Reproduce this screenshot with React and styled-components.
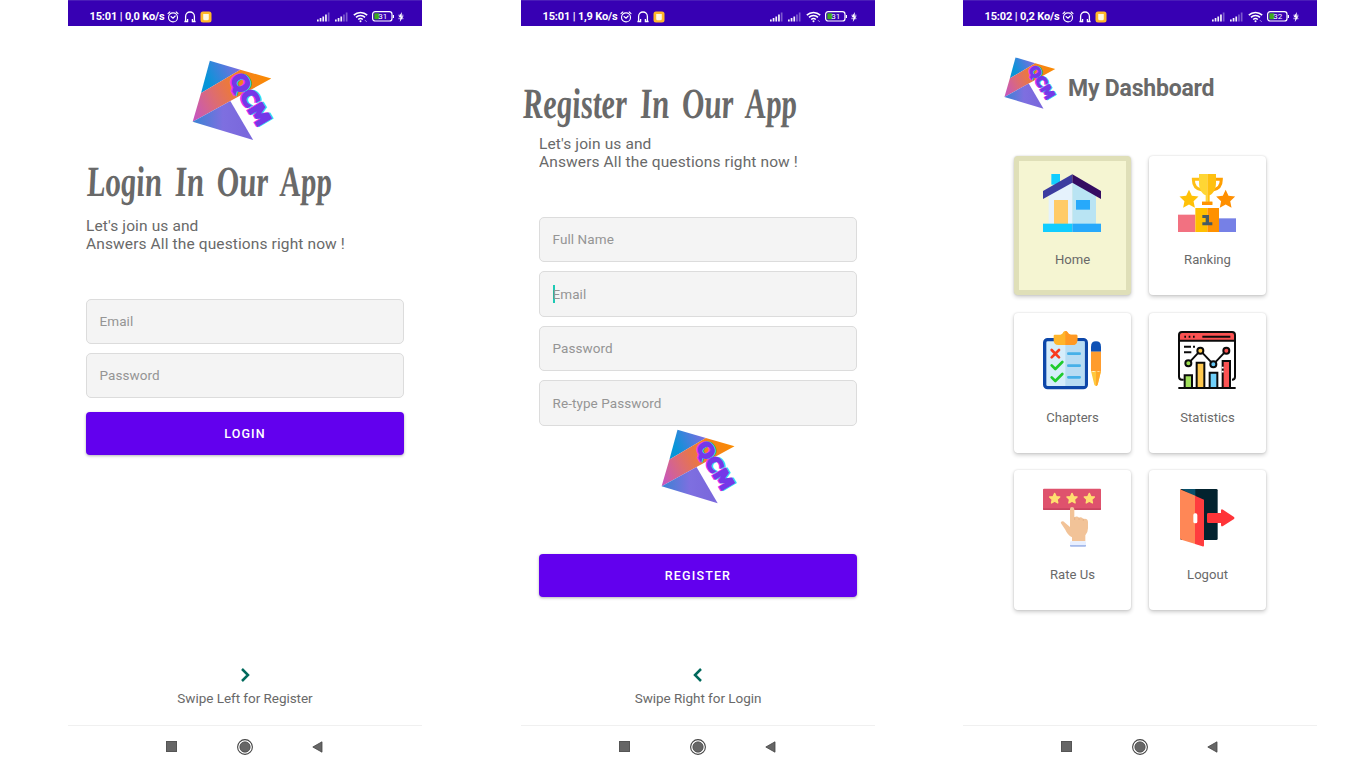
import React from "react";
import styled, { createGlobalStyle } from "styled-components";

const Global = createGlobalStyle`
  * { box-sizing: border-box; }
  body { margin: 0; background: #fff; font-family: Roboto, "Liberation Sans", sans-serif; color: #696969; }
  h1, h2, p { margin: 0; font-weight: 400; }
  svg { display: block; flex: none; overflow: visible; }
`;

const Stage = styled.main`
  display: grid;
  grid-template-columns: 354px 354px 354px;
  column-gap: 99px;
  width: 1366px;
  height: 768px;
  padding-left: 68px;
`;

const Phone = styled.section`
  display: flex;
  flex-direction: column;
  height: 768px;
  margin-left: ${(p) => p.$shift || 0}px;
  width: 354px;
`;

const StatusBar = styled.header`
  display: flex;
  align-items: center;
  flex: none;
  height: 26px;
  padding: 6px 18px 0 21.5px;
  background: #3700b3;
  border-top: 1px solid #4a1cb8;
  color: #fff;
`;

const Clock = styled.span`
  width: 77.5px;
  font-size: 11px;
  line-height: 14px;
  font-weight: 700;
  letter-spacing: -0.15px;
  white-space: nowrap;
`;

const StatusIcons = styled.div`
  display: flex;
  align-items: center;
  gap: ${(p) => p.$gap}px;
  margin-left: ${(p) => (p.$end ? "auto" : 0)};
`;

const Screen = styled.div`
  display: flex;
  flex-direction: column;
  flex: none;
  height: 699px;
  padding: ${(p) => p.$top}px 18px 0;
`;

const LogoSlot = styled.div`
  display: flex;
  padding-top: ${(p) => p.$drop || 0}px;
  padding-left: ${(p) => p.$left || 0}px;
  height: ${(p) => p.$height}px;
`;

const ScriptHeading = styled.h1`
  height: 48px;
  margin-left: ${(p) => p.$left}px;
  font-family: "Liberation Serif", serif;
  font-size: 43px;
  line-height: 48px;
  font-style: italic;
  font-weight: 700;
  word-spacing: 7px;
  white-space: nowrap;
  transform: scaleX(0.72) skewX(6deg);
  transform-origin: left bottom;
`;

const Lead = styled.p`
  margin-top: ${(p) => p.$gap}px;
  font-size: 15.5px;
  line-height: 18px;
  letter-spacing: 0.12px;
  white-space: nowrap;
`;

const Fields = styled.form`
  display: flex;
  flex-direction: column;
  gap: 9px;
  margin-top: ${(p) => p.$gap}px;
`;

const Field = styled.div`
  display: flex;
  align-items: center;
  height: 45.4px;
  padding: 0 0 0.6px 12.5px;
  border: 1px solid #dcdcdc;
  border-radius: 5px;
  background: #f4f4f4;
  color: #959595;
  font-size: 13.5px;
  letter-spacing: 0.08px;
`;

const Caret = styled.i`
  width: 2px;
  height: 18px;
  margin-right: -2px;
  background: #1cc9b4;
`;

const Action = styled.button`
  flex: none;
  height: 43px;
  margin-top: ${(p) => p.$gap}px;
  border: 0;
  border-radius: 4px;
  background: #6200ee;
  box-shadow: 0 1px 3px rgba(0, 0, 0, 0.3);
  color: #fff;
  font: 500 12.5px Roboto, sans-serif;
  letter-spacing: 1.15px;
`;

const Swipe = styled.footer`
  display: flex;
  flex-direction: column;
  align-items: center;
  gap: 7px;
  margin-top: auto;
  padding-bottom: 18px;
  font-size: 13.5px;
  line-height: 18px;
  letter-spacing: -0.04px;
`;

const NavBar = styled.nav`
  display: flex;
  align-items: center;
  flex: none;
  height: 43px;
  padding: 0 0 1px 98px;
  gap: 59.5px;
  border-top: 1px solid #f0f0f0;
`;

const DashHeader = styled.div`
  display: flex;
  align-items: center;
  gap: 11px;
  padding-left: 23px;
  height: 52px;
`;

const DashTitle = styled.h2`
  padding-top: 11px;
  font-size: 23px;
  line-height: 28px;
  font-weight: 700;
  letter-spacing: -0.2px;
  white-space: nowrap;
`;

const Cards = styled.div`
  display: grid;
  grid-template-columns: 117px 117px;
  grid-auto-rows: 139.6px;
  gap: 17.8px 18px;
  margin: 46.6px 0 0 33px;
`;

const Card = styled.article`
  display: flex;
  flex-direction: column;
  align-items: center;
  padding-top: ${(p) => (p.$active ? 13.3 : 18.3)}px;
  padding-right: 1px;
  border: ${(p) => (p.$active ? "5px solid #dfdfb8" : "0 solid #fff")};
  border-radius: 4px;
  background: ${(p) => (p.$active ? "#f5f5d2" : "#fff")};
  box-shadow: 0 0 2px rgba(0, 0, 0, 0.14), 0 2px 4px rgba(0, 0, 0, 0.2);
  font-size: 13.1px;
  line-height: 18px;
`;

const CardLabel = styled.span`
  margin: 19.3px -1px 0 0;
`;

function Logo({ size }) {
  return (
    <svg width={size} height={size * 0.984} viewBox="38 30 244 240">
      <defs>
        <linearGradient id="sky" x1="65" y1="110" x2="180" y2="55" gradientUnits="userSpaceOnUse">
          <stop offset="0.2" stopColor="#0795d8" />
          <stop offset="1" stopColor="#7f6be0" />
        </linearGradient>
        <linearGradient id="band" x1="45" y1="195" x2="270" y2="85" gradientUnits="userSpaceOnUse">
          <stop offset="0" stopColor="#c757bc" />
          <stop offset="0.3" stopColor="#dd6c72" />
          <stop offset="0.6" stopColor="#f07d2b" />
          <stop offset="1" stopColor="#fb8b00" />
        </linearGradient>
        <linearGradient id="base" x1="45" y1="210" x2="200" y2="210" gradientUnits="userSpaceOnUse">
          <stop offset="0" stopColor="#3d82d4" />
          <stop offset="0.55" stopColor="#7e6fe0" />
          <stop offset="1" stopColor="#7a68dc" />
        </linearGradient>
      </defs>
      <path d="M91 32 182 59 65 128Z" fill="url(#sky)" />
      <path d="M182 59 274 85 152 152 40 214 65 128Z" fill="url(#band)" />
      <path d="M152 152 220 268 40 214Z" fill="url(#base)" />
      <g transform="translate(149 86) rotate(59)" fontFamily="DejaVu Sans, sans-serif" fontWeight="700" fontSize="64" strokeWidth="5">
        <text x="-2" y="3" textLength="170" lengthAdjust="spacingAndGlyphs" fill="#f026e6" stroke="#f026e6">QCM</text>
        <text x="2" y="-3" textLength="170" lengthAdjust="spacingAndGlyphs" fill="#28dcf0" stroke="#28dcf0">QCM</text>
        <text x="0" y="0" textLength="170" lengthAdjust="spacingAndGlyphs" fill="#7438e8" stroke="#7438e8">QCM</text>
      </g>
    </svg>
  );
}

function Signal({ level }) {
  return (
    <svg width="14" height="10" viewBox="0 0 14 10">
      {[2, 3.5, 5, 7, 9].map((h, i) => (
        <rect key={h} x={i * 2.7} y={9.5 - h} width="1.7" height={h} fill="#fff" opacity={i < level ? 0.95 : 0.35} />
      ))}
    </svg>
  );
}

function Status({ time, rate, battery }) {
  return (
    <StatusBar>
      <Clock>{time} | {rate} Ko/s</Clock>
      <StatusIcons $gap={4.5}>
        <svg width="12" height="12" viewBox="0 0 12 12" fill="none" stroke="#fff" strokeWidth="1.1" strokeLinecap="round">
          <circle cx="6" cy="6.4" r="4.5" />
          <path d="M1 2.7 2.8 1M11 2.7 9.2 1M4 5.5 6 7.2 8.2 5" />
        </svg>
        <svg width="12" height="12" viewBox="0 0 12 12" fill="none" stroke="#fff" strokeWidth="1.3">
          <path d="M.4 10.5h3.2V8M11.6 10.5H8.4V8M1.6 10.3V5.4a4.4 4.4 0 0 1 8.8 0v4.9" />
        </svg>
        <svg width="12" height="12" viewBox="0 0 12 12">
          <rect x="0.5" y="0.5" width="11" height="11" rx="2.5" fill="#ffb829" />
          <path d="M3.2 3h5.6v4.7a1.5 1.5 0 0 1-1.5 1.5H4.7a1.5 1.5 0 0 1-1.5-1.5z" fill="#fff8e3" />
        </svg>
      </StatusIcons>
      <StatusIcons $gap={3.9} $end>
        <Signal level={4} />
        <Signal level={3} />
        <svg width="15" height="12" viewBox="0 0 15 12" fill="none" stroke="#fff" strokeWidth="1.5">
          <path d="M.8 4.1a9.6 9.6 0 0 1 13.4 0M3 6.4a6.5 6.5 0 0 1 9 0M5.2 8.5a3.4 3.4 0 0 1 4.6 0" />
          <circle cx="7.5" cy="10.2" r="1" fill="#fff" stroke="none" />
          <path d="m12 9.2 1.7 1.7" strokeWidth="1" opacity=".6" />
        </svg>
        <svg width="22" height="11" viewBox="0 0 22 11">
          <rect x="0.6" y="0.6" width="19.4" height="9.4" rx="2.6" fill="none" stroke="#fff" strokeWidth="1.2" />
          <rect x="2.3" y="2.3" width="5" height="6" fill="#3faa1c" />
          <path d="M21.4 4v3" stroke="#fff" strokeWidth="1.2" />
          <text x="10.8" y="8.2" fontSize="8" fontFamily="Roboto" fill="#fff" textAnchor="middle">{battery}</text>
        </svg>
        <svg width="6" height="10" viewBox="0 0 6 10">
          <path d="M3.9 0 .5 5.3h2L1.8 10 5.5 4.3h-2z" fill="#fff" />
          <path d="M.3 3.2h5.2M.3 6.7h5.2" stroke="#fff" strokeWidth=".7" />
        </svg>
      </StatusIcons>
    </StatusBar>
  );
}

function Navigation() {
  return (
    <NavBar>
      <svg width="11" height="11" viewBox="0 0 11 11"><rect x=".5" y=".5" width="10" height="10" fill="#666" stroke="#555" /></svg>
      <svg width="16" height="16" viewBox="0 0 16 16">
        <circle cx="8" cy="8" r="7.4" fill="none" stroke="#444" strokeWidth="1.1" />
        <circle cx="8" cy="8" r="5.2" fill="#666" stroke="#444" strokeWidth=".7" />
      </svg>
      <svg width="11" height="12" viewBox="0 0 11 12"><path d="M.8 6 10 .8v10.4z" fill="#666" stroke="#444" strokeWidth=".8" /></svg>
    </NavBar>
  );
}

function Chevron({ left }) {
  return (
    <svg width="10" height="14" viewBox="0 0 10 14" fill="none" stroke="#00695c" strokeWidth="2.5">
      <path d={left ? "M8 1 2 7l6 6" : "M2 1l6 6-6 6"} />
    </svg>
  );
}

const starPath = (cx, cy, r) =>
  "M" + Array.from({ length: 10 }, (_, i) => {
    const a = (-90 + i * 36) * (Math.PI / 180);
    const d = i % 2 ? r * 0.48 : r;
    return `${(cx + d * Math.cos(a)).toFixed(1)} ${(cy + d * Math.sin(a)).toFixed(1)}`;
  }).join("L") + "Z";

const HomeArt = () => (
  <svg width="58" height="58" viewBox="114 78 174 174">
    <path d="M139 78h26v32h-26z" fill="#11cdff" />
    <path d="M131 140 202 98v130h-71z" fill="#e5f2fc" />
    <path d="M202 98 273 140v88h-71z" fill="#b9e4f3" />
    <path d="M114 129 202 79v25l-88 49z" fill="#3c3ca0" />
    <path d="M202 79 288 129v24l-86-49z" fill="#340c62" />
    <path d="M147 156h42v72h-42z" fill="#ffcb66" />
    <path d="M213 156h42v29h-42z" fill="#27a9fb" />
    <path d="M114 227h88v25h-88z" fill="#11cdff" />
    <path d="M202 227h86v25h-86z" fill="#27a9fb" />
  </svg>
);

const RankingArt = () => (
  <svg width="58" height="58" viewBox="114 78 174 174">
    <path d="M180 94h-20c0 19 8 30 26 32" fill="none" stroke="#ffbf15" strokeWidth="9" />
    <path d="M224 94h20c0 19-8 30-26 32" fill="none" stroke="#ff9f00" strokeWidth="9" />
    <path d="M177 78h25v92h-16v-9h11v-19c-14-7-20-22-20-38z" fill="#ffd634" />
    <path d="M202 78h26v26c0 16-6 31-19 38v19h8v9h-15z" fill="#ffc010" />
    <path d="M186 161h31v10h-31z" fill="#ff9300" />
    <path d={starPath(147, 155, 30)} fill="#ffc107" />
    <path d={starPath(257, 155, 30)} fill="#ff8f00" />
    <path d="M114 200h52v52h-52z" fill="#f27181" />
    <path d="M236 211h52v41h-52z" fill="#7680e6" />
    <path d="M166 180h36v72h-36z" fill="#ffbf00" />
    <path d="M202 180h35v72h-35z" fill="#ff9100" />
    <path d="M187 201h20v22h10v9h-30v-9h10v-13h-10z" fill="#455a64" />
  </svg>
);

const ChaptersArt = () => (
  <svg width="58" height="58" viewBox="114 78 174 174">
    <rect x="119" y="104" width="125" height="144" rx="9" fill="#d5edfb" stroke="#0d47a9" strokeWidth="10" />
    <path d="M181 109h58v134h-58z" fill="#b7dcf3" />
    <path d="M146 92q0-3 3-3h17c5-1 7-3 9-8q6-6 12 0c2 5 4 7 9 8h18q3 0 3 3v14q0 14-14 14h-43q-14 0-14-14z" fill="#ffb52b" />
    <path d="M181 78q5 0 7 4 3 7 10 7h16q3 0 3 3v14q0 14-14 14h-22z" fill="#ff9823" />
    <path d="m140 135 22 22m0-22-22 22" stroke="#f83b1f" strokeWidth="8" strokeLinecap="round" />
    <path d="m140 181 11 11 21-21M140 217l11 11 21-21" fill="none" stroke="#1fcb2e" strokeWidth="8" strokeLinecap="round" strokeLinejoin="round" />
    <path d="M190 146h34M190 182h34M190 217h34" stroke="#45b0e8" strokeWidth="8" strokeLinecap="round" />
    <path d="M258 140v-15q0-16 15-16t15 16v15z" fill="#0e51b5" />
    <path d="M258 140h30v58h-30z" fill="#ff9c2e" />
    <path d="M258 198q8 4 15 0 7 4 15 0l-10 41q-5 7-10 0z" fill="#ffc83d" />
    <path d="M273 198q7 4 15 0l-10 41q-2 4-5 4z" fill="#ffa928" />
  </svg>
);

const StatisticsArt = () => (
  <svg width="58" height="58" viewBox="114 78 174 174" stroke="#0b0b0b" strokeWidth="6">
    <path d="M117 107V90q0-9 9-9h150q9 0 9 9v17z" fill="#fb5252" />
    <path d="M117 107v108q0 9 9 9h5M285 107v108q0 9-9 9" fill="none" />
    <path d="M133 95h5m8 0h5m8 0h5M187 95h84M132 125h21m6 0h6M132 142h22" />
    <path d="m145 175 36-38 39 41 39-41" fill="none" />
    <circle cx="145" cy="175" r="9" fill="#9fe052" />
    <circle cx="181" cy="137" r="9" fill="#ffc94a" />
    <circle cx="220" cy="178" r="9" fill="#66c7f4" />
    <circle cx="259" cy="137" r="9" fill="#fb5252" />
    <path d="M134 249v-38h22v38z" fill="#a0e05a" />
    <path d="M170 249v-76h23v76z" fill="#ffc94f" />
    <path d="M209 249v-46h23v46z" fill="#70cff8" />
    <path d="M248 249v-81h22v81z" fill="#fb5252" />
    <path d="M245 188h6m-6 12h6" stroke="#fff" strokeWidth="5" />
    <path d="M115 249h172" />
  </svg>
);

const RateArt = () => (
  <svg width="58" height="58" viewBox="114 77 174 174">
    <rect x="114" y="76" width="174" height="64" rx="3" fill="#df526d" />
    <path d="M114 135h174v2q0 3-3 3H117q-3 0-3-3z" fill="#c94561" />
    {[149, 201, 253].map((x) => (
      <path key={x} d={starPath(x, 106, 16)} fill="#ffdf70" stroke="#ffdf70" strokeWidth="4" strokeLinejoin="round" />
    ))}
    <path d="M195 137q0-6 6-6t7 6v25q8-5 14 1 8-4 13 4 13-3 14 9v19q0 12-8 21v18h-40v-12q-14-8-20-23l-13-19q-2-5 4-6 4 0 8 4l15 13z" fill="#f2c398" />
    <path d="M209 162v8m13-7v7m13-4v7" stroke="#dfab82" strokeWidth="2" />
    <rect x="195" y="234" width="48" height="16" rx="3" fill="#e8efff" />
    <path d="M195 245h48v2q0 3-3 3h-42q-3 0-3-3z" fill="#a6bbea" />
  </svg>
);

const LogoutArt = () => (
  <svg width="58" height="58" viewBox="114 77 174 174">
    <rect x="121" y="77" width="112" height="153" rx="4" fill="#03232f" />
    <path d="M125 77h41v24z" fill="#0a506b" />
    <path d="M120 78 166 97v145l-42-13q-4-1-4-5z" fill="#ff8756" />
    <path d="m165 97 27 12v137q0 5-5 3l-22-7z" fill="#ff3c3e" />
    <rect x="160" y="150" width="12" height="30" rx="5" fill="#fff" />
    <path d="M205 149h38v-8q1-5 6-2l33 22q3 3 0 6l-33 21q-5 3-6-2v-7h-38q-4 0-4-4v-22q0-4 4-4z" fill="#ff3438" />
  </svg>
);

const cards = [
  ["Home", HomeArt],
  ["Ranking", RankingArt],
  ["Chapters", ChaptersArt],
  ["Statistics", StatisticsArt],
  ["Rate Us", RateArt],
  ["Logout", LogoutArt],
];

function LoginPhone() {
  return (
    <Phone>
      <Status time="15:01" rate="0,0" battery="31" />
      <Screen $top={34}>
        <LogoSlot $left={106} $height={98}><Logo size={82} /></LogoSlot>
        <ScriptHeading $left={2}>Login In Our App</ScriptHeading>
        <Lead $gap={11}>Let's join us and<br />Answers All the questions right now !</Lead>
        <Fields $gap={45.5}>
          <Field>Email</Field>
          <Field>Password</Field>
        </Fields>
        <Action $gap={13.5}>LOGIN</Action>
        <Swipe><Chevron />Swipe Left for Register</Swipe>
      </Screen>
      <Navigation />
    </Phone>
  );
}

function RegisterPhone() {
  return (
    <Phone>
      <Status time="15:01" rate="1,9" battery="31" />
      <Screen $top={54}>
        <ScriptHeading $left={-15}>Register In Our App</ScriptHeading>
        <Lead $gap={7}>Let's join us and<br />Answers All the questions right now !</Lead>
        <Fields $gap={46}>
          <Field>Full Name</Field>
          <Field><Caret />Email</Field>
          <Field>Password</Field>
          <Field>Re-type Password</Field>
        </Fields>
        <LogoSlot $left={122} $height={128} $drop={3.5}><Logo size={76} /></LogoSlot>
        <Action $gap={0}>REGISTER</Action>
        <Swipe><Chevron left />Swipe Right for Login</Swipe>
      </Screen>
      <Navigation />
    </Phone>
  );
}

function DashboardPhone() {
  return (
    <Phone $shift={-11}>
      <Status time="15:02" rate="0,2" battery="32" />
      <Screen $top={31}>
        <DashHeader><Logo size={53} /><DashTitle>My Dashboard</DashTitle></DashHeader>
        <Cards>
          {cards.map(([label, Art], i) => (
            <Card key={label} $active={i === 0}><Art /><CardLabel>{label}</CardLabel></Card>
          ))}
        </Cards>
      </Screen>
      <Navigation />
    </Phone>
  );
}

export default function App() {
  return (
    <>
      <Global />
      <Stage>
        <LoginPhone />
        <RegisterPhone />
        <DashboardPhone />
      </Stage>
    </>
  );
}
